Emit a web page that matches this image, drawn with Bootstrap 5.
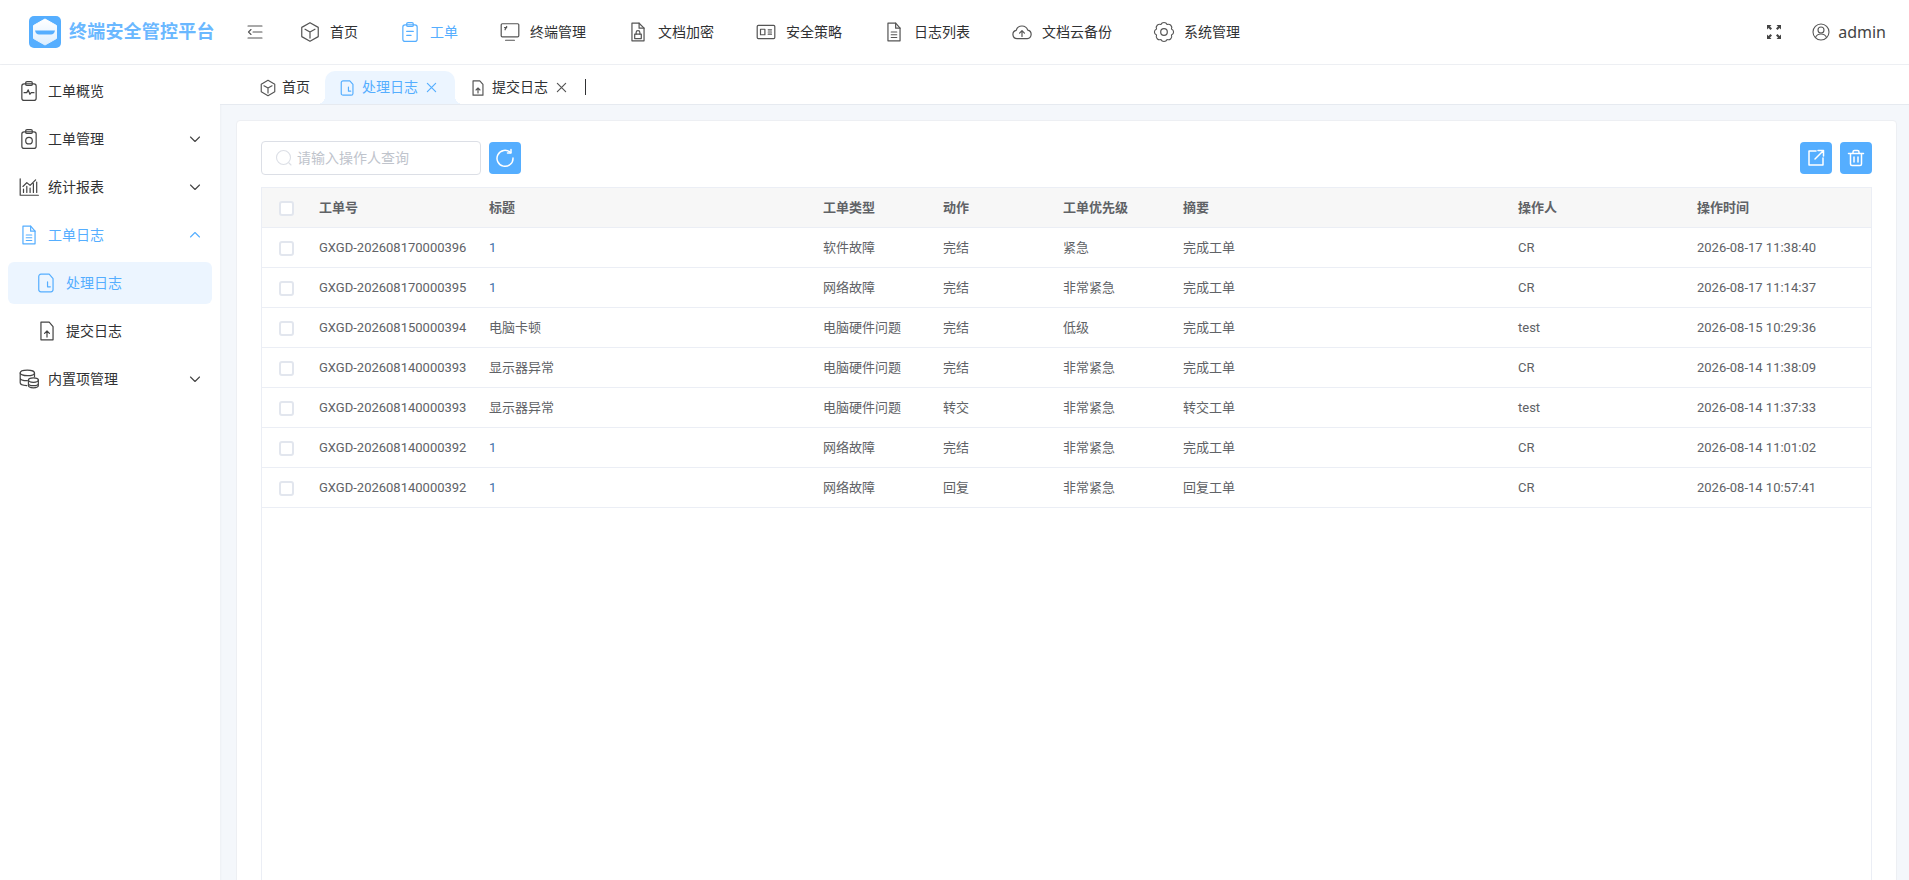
<!DOCTYPE html>
<html lang="zh-CN">
  <head>
    <meta charset="UTF-8" />
    <meta name="viewport" content="width=device-width, initial-scale=1.0" />
    <link
      href="https://cdn.jsdelivr.net/npm/bootstrap@5.3.0/dist/css/bootstrap.min.css"
      rel="stylesheet"
    />
    <title>终端安全管控平台</title>
    <style>
      body {
        height: 880px;
        overflow: hidden;
        background-color: #f4f7fb;
        color: #303133;
        font-family: Roboto, "Noto Sans CJK SC", sans-serif;
        font-size: 14px;
      }

      svg.ico {
        fill: none;
        stroke: currentColor;
        stroke-width: 1.1;
        stroke-linecap: round;
        stroke-linejoin: round;
        flex-shrink: 0;
      }

      .top-bar {
        height: 65px;
        padding-left: 29px;
        padding-right: 23px;
        background-color: #fff;
        border-bottom: 1px solid #edeff3;
      }

      .brand-name {
        width: 146px;
        margin-left: 8px;
        font-family: "Liberation Serif", "Noto Sans CJK SC", serif;
        font-size: 18px;
        font-weight: 700;
        letter-spacing: 0.2px;
        color: #6ab8ff;
        white-space: nowrap;
      }

      .collapse-btn {
        margin-left: 32px;
        margin-right: 37px;
        color: #555;
      }

      .top-menu {
        gap: 42px;
      }

      .top-item {
        gap: 10px;
        color: #303133;
      }

      .top-item svg {
        margin-left: -1px;
        margin-right: -1px;
        color: #555;
      }

      .top-item.on,
      .top-item.on svg {
        color: #55aeff;
      }

      .user-name {
        font-family: "Noto Sans", sans-serif;
        font-size: 16px;
        color: #444;
      }

      .user-ico {
        margin-left: 30px;
        color: #555;
      }

      .side-bar {
        width: 220px;
        flex-shrink: 0;
        padding: 2px 8px;
        background-color: #fff;
        box-shadow: 1px 0 2px rgba(0, 0, 0, 0.03);
      }

      .side-item {
        height: 48px;
        padding-left: 10px;
        padding-right: 11px;
        gap: 8px;
        color: #303133;
      }

      .side-item svg {
        color: #444;
      }

      .side-item.on,
      .side-item.on svg {
        color: #55aeff;
      }

      .side-sub {
        height: 42px;
        margin-top: 3px;
        margin-bottom: 3px;
        padding-left: 28px;
        border-radius: 6px;
      }

      .side-sub.on {
        background-color: #ecf5ff;
      }

      .tab-bar {
        height: 40px;
        padding-left: 39px;
        background-color: #fff;
        border-bottom: 1px solid #e6eaf0;
      }

      .tab-item {
        position: relative;
        height: 33px;
        padding-left: 14px;
        padding-right: 18px;
        gap: 5px;
        color: #303133;
        border-radius: 10px 10px 0 0;
      }

      .tab-item svg {
        stroke-width: 1.3;
        color: #555;
      }

      .tab-item.first {
        padding-left: 0;
        padding-right: 15px;
      }

      .tab-item.on,
      .tab-item.on svg {
        color: #55aeff;
      }

      .tab-item.on {
        background-color: #ecf5ff;
      }

      /* concave corners at the foot of the active tab */
      .tab-item.on::before,
      .tab-item.on::after {
        content: "";
        position: absolute;
        bottom: 0;
        width: 8px;
        height: 8px;
      }

      .tab-item.on::before {
        left: -8px;
        background: radial-gradient(circle at 0 0, transparent 8px, #ecf5ff 8px);
      }

      .tab-item.on::after {
        right: -8px;
        background: radial-gradient(circle at 100% 0, transparent 8px, #ecf5ff 8px);
      }

      .tab-close {
        margin-left: 3px;
      }

      .tab-end {
        width: 1px;
        height: 16px;
        margin-bottom: 9px;
        background-color: #303133;
      }

      .main-card {
        height: 900px;
        margin: 15px 12px 0 16px;
        padding: 20px 24px;
        background-color: #fff;
        border: 1px solid #edeff3;
        border-radius: 4px;
      }

      .search-box {
        width: 220px;
        height: 34px;
        padding-left: 13px;
        gap: 4px;
        color: #c0c4cc;
        font-size: 14px;
        border: 1px solid #dcdfe6;
        border-radius: 4px;
      }

      .search-box svg {
        color: #dcdfe6;
      }

      .blue-btn {
        width: 32px;
        height: 32px;
        padding: 0;
        color: #fff;
        background-color: #55aeff;
        border: 0;
        border-radius: 4px;
      }

      .blue-btn svg.ico {
        stroke-width: 1.5;
      }

      .tool-row {
        height: 34px;
        margin-bottom: 12px;
      }

      .table-box {
        height: 800px;
        border: 1px solid #ebeef5;
        border-bottom: 0;
      }

      .log-table {
        table-layout: fixed;
        width: 100%;
        margin: 0;
        font-size: 13px;
      }

      .log-table th,
      .log-table td {
        height: 40px;
        padding: 0 12px;
        color: #606266;
        vertical-align: middle;
        box-shadow: inset 0 -1px 0 #ebeef5;
        white-space: nowrap;
      }

      .log-table th {
        background-color: #f7f7f7;
        font-weight: 700;
      }

      .log-table td.title-one {
        color: #3f6fa8;
      }

      .fake-check {
        display: block;
        width: 15px;
        height: 15px;
        margin-left: 5px;
        background-color: #fff;
        border: 2px solid #e2e6ee;
        border-radius: 3px;
      }
    </style>
  </head>

  <body>
    <svg width="0" height="0" class="position-absolute">
      <defs>
        <linearGradient id="logo-top" x1="0" y1="0" x2="0" y2="1">
          <stop offset="0" stop-color="#fff" />
          <stop offset="1" stop-color="#dceeff" />
        </linearGradient>
        <symbol id="i-box" viewBox="0 0 20 20"><path d="M10 1.500l7.500 4.300v8.400L10 18.500l-7.500-4.300V5.800z" /><path d="M5.500 7.500L10 10l4.500-2.500M10 10v5.500" /></symbol>
        <symbol id="i-clip" viewBox="0 0 20 20"><rect x="3.500" y="3.500" width="13" height="15" rx="2" /><rect x="7" y="1.500" width="6" height="3.500" rx="1.200" /><path d="M7 9.500h6M7 13h4" /></symbol>
        <symbol id="i-screen" viewBox="0 0 20 20"><rect x="2" y="2.500" width="16" height="12" rx="1" /><path d="M6 17.500h8M5.500 8l1.500-3M5 6h2" /></symbol>
        <symbol id="i-lock" viewBox="0 0 20 20"><path d="M4.500 2h6.500l4.500 4.500V18h-11z" /><path d="M11 2v4.500h4.500" /><rect x="7" y="12" width="6" height="4" /><path d="M8.300 12v-1.500a1.700 1.700 0 0 1 3.400 0V12" /></symbol>
        <symbol id="i-card" viewBox="0 0 20 20"><rect x="2" y="4" width="16" height="12" rx="1" /><rect x="5" y="7.500" width="4" height="5" /><path d="M12 8h3M12 10h3M12 12h3" /></symbol>
        <symbol id="i-doc" viewBox="0 0 20 20"><path d="M4.500 2h7l4 4.500V18h-11z" /><path d="M11.500 2v4.500h4M7.500 10h5M7.500 12.500h5M7.500 15h5" /></symbol>
        <symbol id="i-cloud" viewBox="0 0 20 20"><path d="M5.500 16A3.800 3.800 0 0 1 4.700 8.500 5.500 5.500 0 0 1 15.200 8.300 3.900 3.900 0 0 1 14.800 16z" /><path d="M10 14V9M7.800 11L10 8.800 12.200 11" /></symbol>
        <symbol id="i-gear" viewBox="0 0 20 20"><path d="M6.940 2.610A3.300 3.300 0 0 1 13.060 2.610 3.300 3.300 0 0 1 17.390 6.940 3.300 3.300 0 0 1 17.390 13.060 3.300 3.300 0 0 1 13.060 17.390 3.300 3.300 0 0 1 6.940 17.390 3.300 3.300 0 0 1 2.610 13.060 3.300 3.300 0 0 1 2.610 6.940 3.300 3.300 0 0 1 6.940 2.610z" transform="translate(10 10) scale(.92) translate(-10 -10)" /><circle cx="10" cy="10" r="3" /></symbol>
        <symbol id="i-pulse" viewBox="0 0 20 20"><rect x="3.500" y="3.500" width="13" height="15" rx="2" /><rect x="7" y="1.500" width="6" height="3.500" rx="1.200" /><path d="M5.500 11.500h2.500l1.300-2.500 1.500 4 1.200-1.500h2.500" /></symbol>
        <symbol id="i-target" viewBox="0 0 20 20"><rect x="3.500" y="3.500" width="13" height="15" rx="2" /><rect x="7" y="1.500" width="6" height="3.500" rx="1.200" /><circle cx="10" cy="11.500" r="3" /></symbol>
        <symbol id="i-chart" viewBox="0 0 20 20"><path d="M2 2.500V17.500H18.500M5 15v-3M8 15V9.500M11 15v-4M14 15V7M17 15V5.500M4.500 9.500L8 6l3 2.500 5-5" /></symbol>
        <symbol id="i-clock" viewBox="0 0 20 20"><path d="M4.500 2h7.500l3.500 4v10a2 2 0 0 1-2 2h-9a2 2 0 0 1-2-2V4a2 2 0 0 1 2-2z" /><path d="M10.500 9v4.500h2.500" /></symbol>
        <symbol id="i-up" viewBox="0 0 20 20"><path d="M4.500 2h7.500l3.500 4v12h-11z" /><path d="M10 15.500V10M7.800 12.200L10 10l2.200 2.200" /></symbol>
        <symbol id="i-db" viewBox="0 0 20 20"><ellipse cx="8.500" cy="4.500" rx="6.500" ry="2.500" /><path d="M2 4.500v9c0 1.300 2.500 2.400 6 2.500M2 9c0 1.400 3 2.500 6.500 2.500M15 4.500V8" /><ellipse cx="14" cy="11" rx="4.500" ry="2" /><path d="M9.500 11v5c0 1.100 2 2 4.500 2s4.500-.9 4.500-2v-5M9.500 14c0 1.100 2 2 4.500 2s4.500-.9 4.500-2" /></symbol>
        <symbol id="i-chev" viewBox="0 0 12 12"><path d="M1.500 4l4.500 4.500L10.500 4" /></symbol>
        <symbol id="i-x" viewBox="0 0 12 12"><path d="M1.500 1.500l9 9M10.500 1.500l-9 9" /></symbol>
      </defs>
    </svg>

    <header class="top-bar d-flex align-items-center">
      <svg width="32" height="32" viewBox="0 0 32 32">
        <rect width="32" height="32" rx="5" fill="#55aeff" />
        <path d="M16 3l11.500 6.500v13L16 29 4.500 22.500v-13z" fill="url(#logo-top)" stroke="url(#logo-top)" stroke-linejoin="round" />
        <path d="M6 14.500h20c-.5 2.500-2 4-4 4H10c-2 0-3.500-1.500-4-4z" fill="#55aeff" />
      </svg>
      <div class="brand-name">终端安全管控平台</div>
      <svg class="ico collapse-btn" width="16" height="16" viewBox="0 0 16 16">
        <path d="M1 2h14M6 8h9M1 14h14M4 5.500L1.500 8 4 10.500" />
      </svg>
      <nav class="top-menu d-flex" id="top-menu"></nav>
      <div class="ms-auto d-flex align-items-center">
        <svg width="16" height="16" viewBox="0 0 16 16" fill="#444">
          <path d="M1 1h4.500L4 2.500 6 4.500 4.500 6l-2-2L1 5.500zM15 1v4.500L13.500 4l-2 2L10 4.500l2-2L10.500 1zM1 15v-4.500L2.500 12l2-2L6 11.500l-2 2L5.500 15zM15 15h-4.500l1.500-1.500-2-2 1.500-1.500 2 2 1.500-1.500z" />
        </svg>
        <svg class="ico user-ico me-2" width="18" height="18" viewBox="0 0 18 18">
          <circle cx="9" cy="9" r="8" /><circle cx="9" cy="7" r="3" /><path d="M3.500 14.500c1-2.500 3-3.500 5.500-3.500s4.500 1 5.500 3.500" />
        </svg>
        <span class="user-name">admin</span>
      </div>
    </header>

    <div class="d-flex">
      <aside class="side-bar d-flex flex-column" id="side-bar"></aside>

      <main class="flex-grow-1">
        <div class="tab-bar d-flex align-items-end">
          <div class="tab-item first d-flex align-items-center">
            <svg class="ico" width="18" height="18"><use href="#i-box" /></svg>首页
          </div>
          <div class="tab-item on d-flex align-items-center">
            <svg class="ico" width="18" height="18"><use href="#i-clock" /></svg>处理日志
            <svg class="ico tab-close" width="11" height="11"><use href="#i-x" /></svg>
          </div>
          <div class="tab-item d-flex align-items-center">
            <svg class="ico" width="18" height="18"><use href="#i-up" /></svg>提交日志
            <svg class="ico tab-close" width="11" height="11"><use href="#i-x" /></svg>
          </div>
          <div class="tab-end"></div>
        </div>

        <section class="main-card">
          <div class="tool-row d-flex align-items-center">
            <div class="search-box d-flex align-items-center">
              <svg class="ico" width="18" height="18" viewBox="0 0 18 18">
                <circle cx="8.500" cy="8.500" r="7" /><path d="M14 14l2 2" />
              </svg>
              <span>请输入操作人查询</span>
            </div>
            <button class="blue-btn btn ms-2 d-flex align-items-center justify-content-center">
              <svg class="ico" width="20" height="20" viewBox="0 0 20 20">
                <path d="M15.500 4.500A8 8 0 1 0 18 10" /><path d="M16 1.500v3.500h-3.500" />
              </svg>
            </button>
            <button class="blue-btn btn ms-auto d-flex align-items-center justify-content-center">
              <svg class="ico" width="18" height="18" viewBox="0 0 18 18">
                <path d="M9 2H2v14h14V9M8 10l8-8M11 1.500h5.500V7" />
              </svg>
            </button>
            <button class="blue-btn btn ms-2 d-flex align-items-center justify-content-center">
              <svg class="ico" width="18" height="18" viewBox="0 0 18 18">
                <path d="M1.500 4.500h15M6 4.500V3a1.500 1.500 0 0 1 1.500-1.500h3A1.500 1.500 0 0 1 12 3v1.500M3.500 4.500V15a1.500 1.500 0 0 0 1.500 1.500h8a1.500 1.500 0 0 0 1.500-1.500V4.500M7 8v5M11 8v5" />
              </svg>
            </button>
          </div>

          <div class="table-box">
            <table class="log-table">
              <colgroup>
                <col style="width: 45px" /><col style="width: 170px" /><col style="width: 334px" /><col style="width: 120px" /><col style="width: 120px" /><col style="width: 120px" /><col style="width: 335px" /><col style="width: 179px" /><col />
              </colgroup>
              <thead>
                <tr>
                  <th><span class="fake-check"></span></th>
                  <th>工单号</th><th>标题</th><th>工单类型</th><th>动作</th><th>工单优先级</th><th>摘要</th><th>操作人</th><th>操作时间</th>
                </tr>
              </thead>
              <tbody id="log-rows"></tbody>
            </table>
          </div>
        </section>
      </main>
    </div>

    <script src="https://cdn.jsdelivr.net/npm/bootstrap@5.3.0/dist/js/bootstrap.bundle.min.js"></script>
    <script>
      const menus = [
        ["i-box", "首页"], ["i-clip", "工单", true], ["i-screen", "终端管理"], ["i-lock", "文档加密"],
        ["i-card", "安全策略"], ["i-doc", "日志列表"], ["i-cloud", "文档云备份"], ["i-gear", "系统管理"]
      ];
      const sideItems = [
        { icon: "i-pulse", text: "工单概览" },
        { icon: "i-target", text: "工单管理", arrow: "down" },
        { icon: "i-chart", text: "统计报表", arrow: "down" },
        { icon: "i-doc", text: "工单日志", arrow: "up", on: true },
        { icon: "i-clock", text: "处理日志", sub: true, on: true },
        { icon: "i-up", text: "提交日志", sub: true },
        { icon: "i-db", text: "内置项管理", arrow: "down" }
      ];
      const rows = [
        ["GXGD-202608170000396", "1", "软件故障", "完结", "紧急", "完成工单", "CR", "2026-08-17 11:38:40"],
        ["GXGD-202608170000395", "1", "网络故障", "完结", "非常紧急", "完成工单", "CR", "2026-08-17 11:14:37"],
        ["GXGD-202608150000394", "电脑卡顿", "电脑硬件问题", "完结", "低级", "完成工单", "test", "2026-08-15 10:29:36"],
        ["GXGD-202608140000393", "显示器异常", "电脑硬件问题", "完结", "非常紧急", "完成工单", "CR", "2026-08-14 11:38:09"],
        ["GXGD-202608140000393", "显示器异常", "电脑硬件问题", "转交", "非常紧急", "转交工单", "test", "2026-08-14 11:37:33"],
        ["GXGD-202608140000392", "1", "网络故障", "完结", "非常紧急", "完成工单", "CR", "2026-08-14 11:01:02"],
        ["GXGD-202608140000392", "1", "网络故障", "回复", "非常紧急", "回复工单", "CR", "2026-08-14 10:57:41"]
      ];

      document.getElementById("top-menu").innerHTML = menus.map((m) => `
        <div class="top-item d-flex align-items-center ${m[2] ? "on" : ""}">
          <svg class="ico" width="22" height="22"><use href="#${m[0]}" /></svg>${m[1]}
        </div>`).join("");

      document.getElementById("side-bar").innerHTML = sideItems.map((s) => `
        <div class="side-item d-flex align-items-center ${s.sub ? "side-sub" : ""} ${s.on ? "on" : ""}">
          <svg class="ico" width="22" height="22"><use href="#${s.icon}" /></svg>
          <span class="flex-grow-1">${s.text}</span>
          ${s.arrow ? `<svg class="ico" width="12" height="12"${s.arrow == "up" ? ' transform="rotate(180)"' : ""}><use href="#i-chev" /></svg>` : ""}
        </div>`).join("");

      document.getElementById("log-rows").innerHTML = rows.map((r) => `
        <tr>
          <td><span class="fake-check"></span></td>
          ${r.map((c, i) => `<td class="${i == 1 && c == "1" ? "title-one" : ""}">${c}</td>`).join("")}
        </tr>`).join("");
    </script>
  </body>
</html>
